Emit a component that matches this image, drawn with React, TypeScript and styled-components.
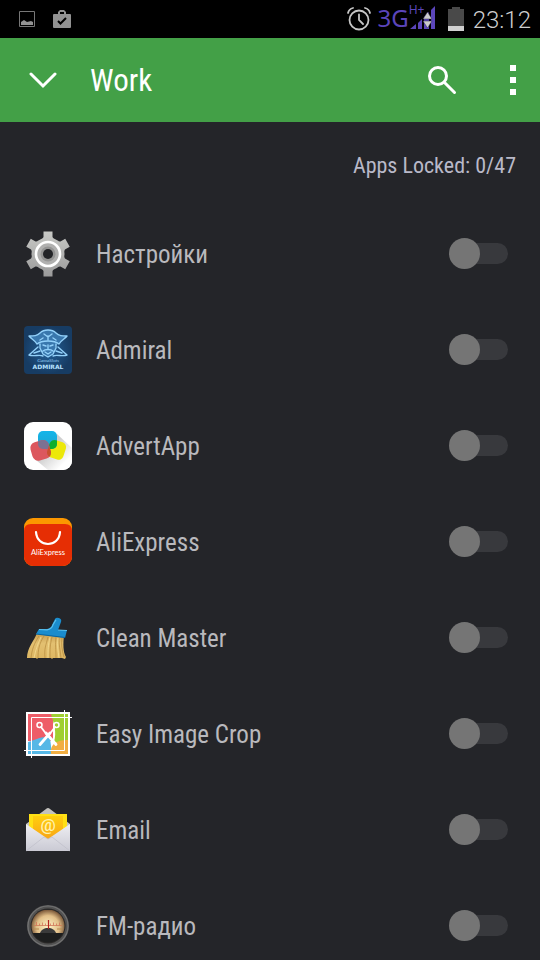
import React, { useState } from "react";
import styled, { createGlobalStyle } from "styled-components";

const GlobalStyle = createGlobalStyle`
  *, *::before, *::after { box-sizing: border-box; }
  body {
    margin: 0;
    background: #242529;
    font-family: "Roboto Condensed", "Liberation Sans Narrow", Roboto, sans-serif;
  }
`;

const Screen = styled.div`
  display: flex;
  flex-direction: column;
  height: 100vh;
  background: #242529;
  color: #b9b9bd;
`;

const StatusBar = styled.div`
  display: flex;
  align-items: center;
  flex: none;
  height: 38px;
  padding: 0 9px 0 18px;
  background: #000;
`;

const Notifications = styled.div`
  display: flex;
  align-items: center;
  gap: 16px;
  flex: 1;
`;

const Indicators = styled.div`
  display: flex;
  align-items: center;
`;

const Network = styled.span`
  display: flex;
  margin: 0 13px 0 7px;
  color: #5b45bb;
`;

const NetworkLabel = styled.span`
  font: 24px/34px "Noto Sans", sans-serif;
`;

const NetworkMode = styled.sup`
  width: 11px;
  margin-right: -10px;
  font: 12px/18px "Noto Sans", sans-serif;
  white-space: nowrap;
`;

const Clock = styled.time`
  margin-left: 9px;
  padding-top: 2px;
  font: 300 24px/36px Roboto, sans-serif;
  color: #cecece;
`;

const Toolbar = styled.header`
  display: flex;
  align-items: center;
  flex: none;
  height: 84px;
  padding-left: 8px;
  background: #43a047;
  color: #fff;
`;

const Title = styled.h1`
  flex: 1;
  margin: 0;
  padding: 2px 0 0 12px;
  font-size: 31px;
  line-height: 40px;
  font-weight: 400;
`;

const IconButton = styled.button<{ $width: number }>`
  display: flex;
  align-items: center;
  justify-content: center;
  width: ${(p) => p.$width}px;
  height: 64px;
  padding: 0;
  border: 0;
  background: none;
  color: inherit;
`;

const Summary = styled.p`
  flex: none;
  height: 84px;
  margin: 0;
  padding: 29px 24px 0;
  font-size: 22px;
  line-height: 30px;
  text-align: right;
  color: #b9b9c8;
`;

const AppList = styled.ul`
  flex: 1;
  min-height: 0;
  margin: 0;
  padding: 0;
  overflow-y: auto;
  scrollbar-width: none;
  list-style: none;
`;

const Row = styled.label`
  display: flex;
  align-items: center;
  gap: 24px;
  height: 96px;
  padding: 0 32px 0 24px;
`;

const AppName = styled.span`
  flex: 1;
  padding-top: 2px;
  font-size: 25px;
  line-height: 32px;
`;

const SwitchTrack = styled.span`
  display: grid;
  align-items: center;
  width: 59px;
  height: 33px;
  padding-bottom: 2px;

  &::before {
    content: "";
    grid-area: 1 / 1;
    height: 21px;
    margin-left: 5px;
    border-radius: 11px;
    background: #38393d;
  }
`;

const Switch = styled.input`
  grid-area: 1 / 1;
  display: flex;
  appearance: none;
  width: 59px;
  height: 31px;
  margin: 0;

  &::before {
    content: "";
    width: 31px;
    height: 31px;
    border-radius: 50%;
    background: #757575;
  }

  &:checked {
    justify-content: flex-end;
  }

  &:checked::before {
    background: #43a047;
  }
`;

const Art = ({ children }: { children: React.ReactNode }) => (
  <svg width="48" height="48" viewBox="0 0 48 48" aria-hidden="true">{children}</svg>
);

const GearIcon = () => (
  <Art>
    <defs>
      <linearGradient id="gear" gradientUnits="userSpaceOnUse" x1="24" y1="2" x2="24" y2="46">
        <stop offset="0" stopColor="#c8c9c6" />
        <stop offset="1" stopColor="#9b9b9b" />
      </linearGradient>
      <mask id="teeth">
        <circle cx="24" cy="24" r="16.500" fill="#fff" />
        {[0, 60, 120, 180, 240, 300].map((a) => (
          <path key={a} fill="#fff" d="M17.500 10 19.500 7v-5.500h9V7l2 3Z" transform={`rotate(${a} 24 24)`} />
        ))}
      </mask>
    </defs>
    <path d="M0 0h48v48H0Z" fill="url(#gear)" mask="url(#teeth)" />
    <circle cx="24" cy="24" r="12" fill="#b0b0af" stroke="#fff" strokeWidth="2.600" />
    <circle cx="24" cy="24" r="7.500" fill="#949493" />
    <circle cx="24" cy="24" r="5" fill="#232427" />
  </Art>
);

const AdmiralIcon = () => (
  <Art>
    <defs>
      <radialGradient id="navy">
        <stop offset="0" stopColor="#23619a" />
        <stop offset="1" stopColor="#173c63" />
      </radialGradient>
    </defs>
    <rect width="48" height="48" rx="4" fill="url(#navy)" />
    <path d="M5 10c5 0 8 0 11-3 4-4 12-4 16 0 3 3 6 3 11 3-2 3-6 4-8 8l-3 1-2 7-6 5-6-5-2-7-3-1c-2-4-6-5-8-8Z" fill="#3977ad" />
    <g fill="none" stroke="#93d1fa" strokeWidth="1.400" strokeLinejoin="round" strokeLinecap="round">
      <path d="M5 10c5 0 8 0 11-3 4-4 12-4 16 0 3 3 6 3 11 3-2 3-6 4-8 8-5-4-17-4-22 0-2-4-6-5-8-8Z" />
      <path d="M20 8l4 3 4-3M24 10v4M19 12l-3 2M29 12l3 2" />
      <path d="M16 18v4l3 6 5 3 5-3 3-6v-4M19 19l3 1M29 19l-3 1M24 19v4M19 25c2-2 8-2 10 0M21 26l3 2 3-2" />
      <path d="M14 21 5 29c5 2 10-1 14 1M34 21l9 8c-5 2-10-1-14 1M10 27l6-2M38 27l-6-2" />
    </g>
    <text x="24" y="36" textAnchor="middle" fontFamily="Liberation Serif, serif" fontSize="5" fontStyle="italic" fill="#9ed5fa">GameSlots</text>
    <text x="24" y="43" textAnchor="middle" fontFamily="DejaVu Sans, sans-serif" fontSize="6" fontWeight="700" fill="#b7e1ff">ADMIRAL</text>
  </Art>
);

const AdvertIcon = () => (
  <Art>
    <defs>
      <linearGradient id="shade" x1="0" y1="0" x2="1" y2="1">
        <stop offset=".4" stopColor="#cfcfcf" />
        <stop offset=".8" stopColor="#fff" />
      </linearGradient>
      <linearGradient id="sky" x1="0" y1="0" x2="0" y2="1">
        <stop offset="0" stopColor="#13b5ea" />
        <stop offset="1" stopColor="#1fa4cf" />
      </linearGradient>
      <clipPath id="blueTile"><rect x="14" y="9" width="19" height="18" rx="5" /></clipPath>
      <clipPath id="yellowTile"><rect x="24" y="19" width="17" height="18" rx="5" transform="rotate(18 33 28)" /></clipPath>
    </defs>
    <rect width="48" height="48" rx="9" fill="#fff" />
    <path d="m33 12 15 14v13a9 9 0 0 1-9 9H24L12 38Z" fill="url(#shade)" />
    <rect x="24" y="19" width="17" height="18" rx="5" fill="#ece80a" transform="rotate(18 33 28)" />
    <rect x="14" y="9" width="19" height="18" rx="5" fill="url(#sky)" />
    <g clipPath="url(#blueTile)">
      <rect x="24" y="19" width="17" height="18" rx="5" fill="#0caf2c" transform="rotate(18 33 28)" />
    </g>
    <rect x="7" y="19" width="19" height="19" rx="6" fill="#dc575e" transform="rotate(-16 16 28)" />
    <g clipPath="url(#blueTile)">
      <rect x="7" y="19" width="19" height="19" rx="6" fill="#7c7192" transform="rotate(-16 16 28)" />
    </g>
    <g clipPath="url(#yellowTile)">
      <rect x="7" y="19" width="19" height="19" rx="6" fill="#c8502e" transform="rotate(-16 16 28)" />
    </g>
  </Art>
);

const AliExpressIcon = () => (
  <Art>
    <rect width="48" height="48" rx="9" fill="#fc9700" />
    <path d="M0 13q0-7 7-7h34q7 0 7 7v26a9 9 0 0 1-9 9H9a9 9 0 0 1-9-9Z" fill="#e62e04" />
    <path d="M12 14c1 16 23 16 24 0" fill="none" stroke="#fff" strokeWidth="2.200" strokeLinecap="round" />
    <text x="24" y="37" textAnchor="middle" fontFamily="Lato, sans-serif" fontSize="7.500" fill="#fff">AliExpress</text>
  </Art>
);

const BroomIcon = () => (
  <Art>
    <defs>
      <linearGradient id="straw" x1="0" y1="0" x2="0" y2="1">
        <stop offset="0" stopColor="#c99e4e" />
        <stop offset=".4" stopColor="#e3c071" />
        <stop offset="1" stopColor="#ddb661" />
      </linearGradient>
    </defs>
    <path d="M13 19c-3 8-10 15-10 25h9l1 1 1-1h13l1 1 1-1h9l3 1 1-2c-3-5-3-13-2-22Z" fill="url(#straw)" />
    <g fill="none" stroke="#b48a3e" strokeWidth=".7">
      <path d="M15 22c-5 8-7 13-8 22M20 22c-5 8-6 14-6 22M24 23c-2 8-4 12-3 21M28 23c-2 8-2 12-2 21M32 23c-1 8 0 12 0 21M35 24c0 7 1 11 2 20M38 24c-1 6 0 12 2 19" />
    </g>
    <path d="M17 23c-4 9-5 12-7 21M26 23c-2 9-2 12-2 21M34 24c-1 8 0 12 1 20" fill="none" stroke="#f3d98f" strokeWidth=".9" />
    <path d="m15 15 8 0q4-1 5-4l3-6q1-2 4-1 3 1 2 4l-3 8 9 0-2 8-29-4Z" fill="#1a8ccd" />
    <path d="m15 15.500 8 .3q5-1 6-5l3-5M34 16l9 .5" fill="none" stroke="#5bc0ed" strokeWidth="1.200" />
    <path d="m12 20 29 3.500" stroke="#0b659f" strokeWidth="1.200" />
  </Art>
);

const CropIcon = () => (
  <Art>
    <path fill="#fff" d="M2 2h44v44H2Z" />
    <path fill="#ee5d68" d="M4 4h25v27H4Z" />
    <path fill="#a0cf30" d="M27 4h17v28H30c3-10 0-18-3-28Z" />
    <path fill="#56b8e6" d="M4 32c10-3 15-7 22-4l2 16H4Z" />
    <path fill="#f1ae42" d="M27 44c-1-8 3-14 17-14v14Z" />
    <path d="M7.500 7.500H48M7.500 7.500V48M40.500 0v40.500M0 40.500h40.500" stroke="#fff" strokeWidth="1" fill="none" />
    <g stroke="#fff" fill="none" strokeLinecap="round">
      <circle cx="15.500" cy="15" r="2.500" strokeWidth="1.500" />
      <circle cx="32.500" cy="15" r="2.500" strokeWidth="1.500" />
      <path d="m17 17 6 8M31 17l-6 8" strokeWidth="1.800" />
      <path d="m22 23 10 11.500M26 23 16 34.500" strokeWidth="2.800" />
    </g>
  </Art>
);

const EmailIcon = () => (
  <Art>
    <defs>
      <linearGradient id="note" x1="0" y1="0" x2="0" y2="1">
        <stop offset="0" stopColor="#ffcf0e" />
        <stop offset="1" stopColor="#f79c18" />
      </linearGradient>
      <linearGradient id="paper" x1="0" y1="0" x2="0" y2="1">
        <stop offset="0" stopColor="#eeeef2" />
        <stop offset="1" stopColor="#cacad4" />
      </linearGradient>
    </defs>
    <path d="m2 18 20-15q2-2 4 0l20 15-3 9H5Z" fill="#c2c1bd" />
    <path d="M5 8h38v22L24 38 5 30Z" fill="#ffe014" />
    <path d="M9 10h30v22L24 38 9 32Z" fill="url(#note)" />
    <text x="24" y="25" textAnchor="middle" fontFamily="Roboto, sans-serif" fontSize="17" fontWeight="500" fill="#fff3ae">@</text>
    <path d="m2 18 22 15 22-15v27H2Z" fill="url(#paper)" />
    <path d="m2 45 18-14 4 2 4-2 18 14" fill="none" stroke="#bebec8" strokeWidth=".7" />
  </Art>
);

const RadioIcon = () => (
  <Art>
    <defs>
      <radialGradient id="dial" gradientUnits="userSpaceOnUse" cx="24" cy="25" r="19">
        <stop offset="0" stopColor="#fff3c8" />
        <stop offset=".6" stopColor="#e2bf88" />
        <stop offset="1" stopColor="#5a3820" />
      </radialGradient>
      <clipPath id="dialClip"><circle cx="24" cy="24" r="16.500" /></clipPath>
    </defs>
    <circle cx="24" cy="24" r="21" fill="#525252" />
    <circle cx="24" cy="24" r="20" fill="none" stroke="#737373" strokeWidth="1.200" />
    <circle cx="24" cy="24" r="17.500" fill="#2b2928" />
    <g clipPath="url(#dialClip)">
      <path d="M6 8h36v23H6Z" fill="url(#dial)" />
      <path d="M10 23.500h28" stroke="#cf7b58" strokeWidth=".8" />
      <path d="M12.500 20v3.500m3-2v2m3-3v3m3-2v2m5-2v2m3-3v3m3-2v2m3-3v3" stroke="#d2735a" strokeWidth=".8" />
      <path d="M10 27h5m18 0h5" stroke="#b58a50" />
      <path d="M6 31h36v12H6Z" fill="#1d1e1e" />
      <path d="M16 31c1-3 4-5 8-5s7 2 8 5Z" fill="#3a3a3a" />
      <path d="M24.500 18v9" stroke="#b42520" strokeWidth="1.200" />
    </g>
  </Art>
);

const PictureIcon = () => (
  <svg width="18" height="18" viewBox="0 0 18 18" aria-hidden="true">
    <path d="M1.500 1.500h15v15h-15Z" fill="none" stroke="#777" />
    <path d="M3 15v-3l3-2 3 2 4-1 2 1v3Z" fill="#929292" />
  </svg>
);

const BriefcaseIcon = () => (
  <svg width="20" height="20" viewBox="0 0 20 20" aria-hidden="true">
    <path d="M2 5h4V3l2-2h4l2 2v2h4q1 0 1 1v12q0 1-1 1H2q-1 0-1-1V6q0-1 1-1Zm6 0h4V3H8Z" fill="#929292" fillRule="evenodd" />
    <path d="m6 12 2.500 2.500L14 9" fill="none" stroke="#000" strokeWidth="2" />
  </svg>
);

const AlarmIcon = () => (
  <svg width="24" height="24" viewBox="0 0 24 24" fill="none" stroke="#c6c6c6" strokeWidth="1.800" strokeLinecap="round" aria-hidden="true">
    <circle cx="12" cy="13" r="9.500" />
    <path d="M12 7.500V13l4 4M1 6q1-4 5-5M23 6q-1-4-5-5" />
  </svg>
);

const SignalIcon = () => (
  <svg width="25" height="36" viewBox="0 0 25 36" aria-hidden="true">
    <path d="M0 28 6 23v5ZM8 28v-6l4-4v10ZM14 28V16l5-5v17ZM21 28V9l4-4v23Z" fill="#5b45bb" />
    <path d="m13 18 4.500-7 4.500 7ZM13 20h9l-4.500 7Z" fill="#ccc" stroke="#29244a" strokeWidth=".5" />
  </svg>
);

const BatteryIcon = () => (
  <svg width="16" height="24" viewBox="0 0 16 24" aria-hidden="true">
    <path d="M0 2h4V0h8v2h4v22H0Z" fill="#494949" />
    <path d="M0 19h16v5H0Z" fill="#d0d0d0" />
  </svg>
);

const apps = [
  { name: "Настройки", Icon: GearIcon },
  { name: "Admiral", Icon: AdmiralIcon },
  { name: "AdvertApp", Icon: AdvertIcon },
  { name: "AliExpress", Icon: AliExpressIcon },
  { name: "Clean Master", Icon: BroomIcon },
  { name: "Easy Image Crop", Icon: CropIcon },
  { name: "Email", Icon: EmailIcon },
  { name: "FM-радио", Icon: RadioIcon },
];

export default function App() {
  const [locked, setLocked] = useState<string[]>([]);
  const toggle = (name: string) =>
    setLocked((cur) => (cur.includes(name) ? cur.filter((n) => n !== name) : [...cur, name]));

  return (
    <Screen>
      <GlobalStyle />
      <StatusBar>
        <Notifications>
          <PictureIcon />
          <BriefcaseIcon />
        </Notifications>
        <Indicators>
          <AlarmIcon />
          <Network>
            <NetworkLabel>3G</NetworkLabel>
            <NetworkMode>H+</NetworkMode>
            <SignalIcon />
          </Network>
          <BatteryIcon />
          <Clock>23:12</Clock>
        </Indicators>
      </StatusBar>
      <Toolbar>
        <IconButton type="button" aria-label="Choose profile" $width={70}>
          <svg width="28" height="18" viewBox="0 0 28 18" fill="none" stroke="currentColor" strokeWidth="3" strokeLinecap="round">
            <path d="m2 3 12 12L26 3" />
          </svg>
        </IconButton>
        <Title>Work</Title>
        <IconButton type="button" aria-label="Search" $width={88}>
          <svg width="30" height="30" viewBox="0 0 30 30" fill="none" stroke="currentColor" strokeLinecap="round">
            <circle cx="11" cy="11" r="8.500" strokeWidth="3" />
            <path d="m17.500 17.500 10 10" strokeWidth="3" />
          </svg>
        </IconButton>
        <IconButton type="button" aria-label="More options" $width={54}>
          <svg width="6" height="30" viewBox="0 0 6 30" fill="currentColor">
            <path d="M0 0h6v6H0ZM0 12h6v6H0ZM0 24h6v6H0Z" />
          </svg>
        </IconButton>
      </Toolbar>
      <Summary>Apps Locked: {locked.length}/47</Summary>
      <AppList>
        {apps.map(({ name, Icon }) => (
          <li key={name}>
            <Row>
              <Icon />
              <AppName>{name}</AppName>
              <SwitchTrack>
                <Switch
                  type="checkbox"
                  role="switch"
                  checked={locked.includes(name)}
                  onChange={() => toggle(name)}
                />
              </SwitchTrack>
            </Row>
          </li>
        ))}
      </AppList>
    </Screen>
  );
}
